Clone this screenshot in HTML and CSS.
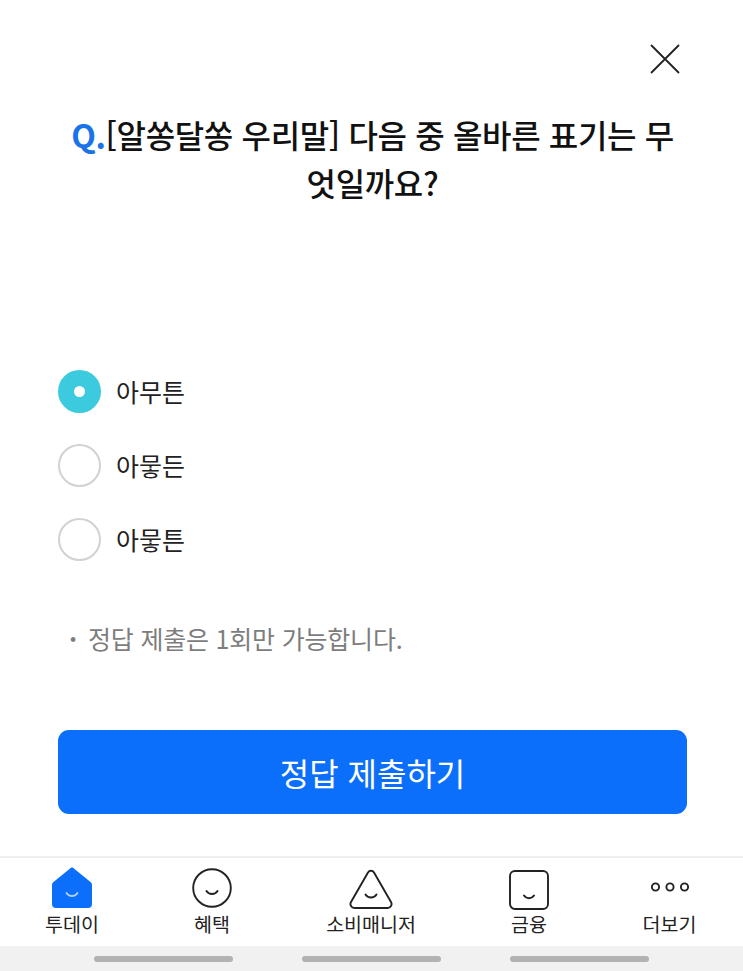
FILE: index.html
```html
<!DOCTYPE html>
<html lang="ko">
<head>
<meta charset="utf-8">
<title>퀴즈</title>
<link rel="stylesheet" href="styles.css">
</head>
<body>
<div class="screen">
  <main class="main">
    <div class="close-row">
      <svg class="close" viewBox="0 0 30 30" width="30" height="30"><path d="M1 1L29 29M29 1L1 29" fill="none" stroke="#222" stroke-width="1.800"/></svg>
    </div>
    <h1 class="question"><span class="q">Q.</span>[알쏭달쏭 우리말] 다음 중 올바른 표기는 무엇일까요?</h1>
    <ul class="options">
      <li class="option"><span class="radio radio-on"><span class="radio-dot"></span></span><span>아무튼</span></li>
      <li class="option"><span class="radio"></span><span>아뭏든</span></li>
      <li class="option"><span class="radio"></span><span>아뭏튼</span></li>
    </ul>
    <p class="note"><span class="bullet">·</span>정답 제출은 1회만 가능합니다.</p>
    <button class="submit">정답 제출하기</button>
  </main>
  <nav class="nav">
    <div class="tab">
      <svg class="icon" viewBox="0 0 44 44" width="44" height="44"><path d="M19.5 2.900a3.500 3.500 0 0 1 5 0L40.500 16a4 4 0 0 1 1.500 3V38a4 4 0 0 1-4 4H6a4 4 0 0 1-4-4V19a4 4 0 0 1 1.500-3Z" fill="#0b6ffb"/><path d="M16.500 27c2.500 4 8.500 4 11 0" fill="none" stroke="#a9d0ff" stroke-width="1.800" stroke-linecap="round"/></svg>
      <span class="tab-label">투데이</span>
    </div>
    <div class="tab">
      <svg class="icon" viewBox="0 0 44 44" width="44" height="44"><circle cx="22" cy="22" r="18.800" fill="none" stroke="#222" stroke-width="1.900"/><path d="M16.500 25c2.500 4 8.500 4 11 0" fill="none" stroke="#222" stroke-width="2" stroke-linecap="round"/></svg>
      <span class="tab-label">혜택</span>
    </div>
    <div class="tab">
      <svg class="icon" viewBox="0 0 44 44" width="44" height="44"><path d="M19 6.500a3.500 3.500 0 0 1 6 0L42 36a4 4 0 0 1-3.500 6H5.500A4 4 0 0 1 2 36Z" fill="none" stroke="#222" stroke-width="1.900" stroke-linejoin="round"/><path d="M16.500 28.500c2.500 4 8.500 4 11 0" fill="none" stroke="#222" stroke-width="2" stroke-linecap="round"/></svg>
      <span class="tab-label">소비매니저</span>
    </div>
    <div class="tab">
      <svg class="icon" viewBox="0 0 44 44" width="44" height="44"><rect x="3" y="5" width="38" height="38" rx="5" fill="none" stroke="#222" stroke-width="1.900"/><path d="M17 29.500c2.500 3.500 7.500 3.500 10 0" fill="none" stroke="#222" stroke-width="2" stroke-linecap="round"/></svg>
      <span class="tab-label">금융</span>
    </div>
    <div class="tab">
      <svg class="icon" viewBox="0 0 44 44" width="44" height="44"><g fill="none" stroke="#222" stroke-width="1.900"><circle cx="7.500" cy="21" r="3.600"/><circle cx="22" cy="21" r="3.600"/><circle cx="36.500" cy="21" r="3.600"/></g></svg>
      <span class="tab-label">더보기</span>
    </div>
  </nav>
  <div class="home-bars">
    <span class="home-bar"></span>
    <span class="home-bar"></span>
    <span class="home-bar"></span>
  </div>
</div>
</body>
</html>
```
FILE: styles.css
```css
* { box-sizing: border-box; }
html, body { margin: 0; padding: 0; background: #fff; }
body {
  font-family: "Noto Sans CJK KR", "Noto Sans", sans-serif;
  color: #1c1c1c;
}
.screen {
  width: 743px;
  height: 971px;
  display: flex;
  flex-direction: column;
  overflow: hidden;
}
.main {
  flex: 1;
  padding: 44px 56px 0 58px;
  display: flex;
  flex-direction: column;
}
.close-row {
  display: flex;
  justify-content: flex-end;
  margin-right: 7px;
  height: 30px;
}
.question {
  margin: 36px 0 0;
  font-size: 32px;
  line-height: 48px;
  font-weight: 500;
  text-align: center;
  letter-spacing: -0.35px;
  color: #111;
}
.q { color: #1a73e8; font-weight: 700; }
.options {
  list-style: none;
  margin: 163px 0 0;
  padding: 0;
  display: flex;
  flex-direction: column;
  gap: 30px;
}
.option {
  display: flex;
  align-items: center;
  gap: 15px;
  height: 44px;
  font-size: 25px;
  color: #222;
}
.radio {
  width: 43px;
  height: 43px;
  border-radius: 50%;
  border: 2px solid #d2d2d2;
  background: #fff;
  display: flex;
  align-items: center;
  justify-content: center;
}
.radio-on { background: #3ccbde; border-color: #3ccbde; }
.radio-dot { width: 11px; height: 11px; border-radius: 50%; background: #fff; }
.note {
  margin: 59px 0 0;
  font-size: 25px;
  line-height: 36px;
  letter-spacing: -0.2px;
  color: #7d7d7d;
}
.bullet { display: inline-block; width: 30px; text-align: center; font-weight: 700; }
.submit {
  margin-top: 74px;
  height: 84px;
  border: 0;
  border-radius: 11px;
  background: #0b6ffb;
  color: #fff;
  font: 400 32px "Noto Sans CJK KR", sans-serif;
  width: 100%;
}
.nav {
  height: 90px;
  border-top: 2px solid #efefef;
  display: grid;
  grid-template-columns: 144px 136px 182px 134px 147px;
  background: #fff;
}
.tab {
  display: flex;
  flex-direction: column;
  align-items: center;
  padding-top: 8px;
}
.icon { display: block; }
.tab-label {
  font-size: 19.5px;
  line-height: 27px;
  color: #222;
}
.home-bars {
  height: 25px;
  background: #f1f1f1;
  display: flex;
  justify-content: center;
  align-items: center;
  gap: 69px;
}
.home-bar {
  width: 139px;
  height: 6px;
  border-radius: 3px;
  background: #b2b2b2;
}
```
